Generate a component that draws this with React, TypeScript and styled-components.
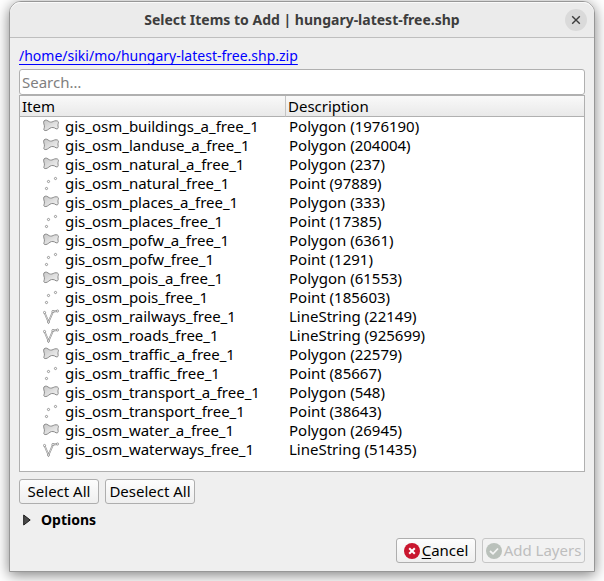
import React, { useState } from 'react';
import styled, { createGlobalStyle } from 'styled-components';

const GlobalStyle = createGlobalStyle`
  *, *::before, *::after { box-sizing: border-box; }
  body {
    margin: 0;
    background: #ffffff;
    color: #000000;
    font-family: "Noto Sans", "Open Sans", sans-serif;
    font-size: 15px;
    line-height: 19px;
  }
  button, input { font: inherit; color: inherit; }
`;

const Desktop = styled.div`
  display: flex;
  min-height: 100vh;
  padding: 1px 9px 9px;
  overflow: hidden;
`;

const Dialog = styled.main`
  flex: 1;
  min-width: 0;
  display: flex;
  flex-direction: column;
  background: #efefef;
  border: 1px solid #979797;
  border-radius: 12px 12px 0 0;
  box-shadow: 0 3px 14px rgba(0, 0, 0, 0.5);
`;

const TitleBar = styled.header`
  display: grid;
  grid-template-columns: 22px 1fr 22px;
  align-items: center;
  height: 36px;
  padding: 0 7px;
  background: #ebebeb;
  border-bottom: 1px solid #bebebe;
  border-radius: 11px 11px 0 0;
  box-shadow: inset 0 1px #fafafa;
`;

const Title = styled.h1`
  grid-column: 2;
  margin: 0;
  color: #3d3d3d;
  font-size: 14px;
  font-weight: 700;
  text-align: center;
  white-space: nowrap;
`;

const CloseButton = styled.button`
  display: grid;
  place-items: center;
  width: 22px;
  height: 22px;
  padding: 0;
  border: 0;
  border-radius: 50%;
  background: #dadada;
  color: #3d3d3d;
`;

const Body = styled.div`
  flex: 1;
  display: flex;
  flex-direction: column;
  padding: 8px 9px;
`;

const PathLink = styled.a`
  align-self: flex-start;
  color: #0000ff;
  font-size: 14px;
  text-underline-offset: 3px;
`;

const Search = styled.input`
  width: 100%;
  height: 26px;
  margin-top: 4px;
  padding: 0 2px;
  background: #ffffff;
  border: 1px solid #b0b0b0;
  border-radius: 3px;
  outline: none;
  &::placeholder { color: #808080; opacity: 1; }
`;

const ListFrame = styled.div`
  flex: 1;
  background: #ffffff;
  border: 1px solid #b0b0b0;
`;

const Table = styled.table`
  width: 100%;
  border-collapse: separate;
  border-spacing: 0;
  table-layout: fixed;
`;

const HeadCell = styled.th<{ $width?: number }>`
  width: ${(p) => (p.$width ? `${p.$width}px` : 'auto')};
  height: 21px;
  padding: 0 2px;
  background: linear-gradient(#f9f9f9, #e9e9e9);
  border-bottom: 1px solid #b0b0b0;
  border-right: ${(p) => (p.$width ? '1px solid #c4c4c4' : '0')};
  font-weight: 400;
  text-align: left;
`;

const Cell = styled.td`
  height: 19px;
  padding: 0 3px;
  white-space: nowrap;
`;

const ItemLabel = styled.span`
  display: flex;
  align-items: center;
  gap: 6px;
  padding-left: 20px;
`;

const LayerIcon = styled.svg`
  flex: none;
  width: 16px;
  height: 16px;
`;

const ButtonRow = styled.div<{ $end?: boolean }>`
  display: flex;
  gap: 6px;
  justify-content: ${(p) => (p.$end ? 'flex-end' : 'flex-start')};
  margin-top: ${(p) => (p.$end ? '9px' : '7px')};
`;

const PushButton = styled.button<{ $width: number }>`
  display: flex;
  align-items: center;
  justify-content: center;
  gap: 2px;
  min-width: ${(p) => p.$width}px;
  height: 25px;
  padding: 0 2px;
  background: linear-gradient(#fdfdfd, #efefef);
  border: 1px solid #aeaeae;
  border-radius: 3px;
  white-space: nowrap;
  &:disabled { color: #bebebe; border-color: #c6c6c6; background: #f2f2f2; }
`;

const Mnemonic = styled.span`
  text-decoration: underline;
  text-underline-offset: 2px;
`;

const ActionIcon = styled.svg`
  flex: none;
  width: 16px;
  height: 16px;
`;

const OptionsToggle = styled.button`
  align-self: flex-start;
  display: flex;
  align-items: center;
  gap: 10px;
  margin-top: 6px;
  padding: 0 4px;
  border: 0;
  background: none;
  font-size: 14px;
  font-weight: 700;
`;

type Kind = 'Polygon' | 'Point' | 'LineString';

const layers: [string, Kind, number][] = [
  ['gis_osm_buildings_a_free_1', 'Polygon', 1976190],
  ['gis_osm_landuse_a_free_1', 'Polygon', 204004],
  ['gis_osm_natural_a_free_1', 'Polygon', 237],
  ['gis_osm_natural_free_1', 'Point', 97889],
  ['gis_osm_places_a_free_1', 'Polygon', 333],
  ['gis_osm_places_free_1', 'Point', 17385],
  ['gis_osm_pofw_a_free_1', 'Polygon', 6361],
  ['gis_osm_pofw_free_1', 'Point', 1291],
  ['gis_osm_pois_a_free_1', 'Polygon', 61553],
  ['gis_osm_pois_free_1', 'Point', 185603],
  ['gis_osm_railways_free_1', 'LineString', 22149],
  ['gis_osm_roads_free_1', 'LineString', 925699],
  ['gis_osm_traffic_a_free_1', 'Polygon', 22579],
  ['gis_osm_traffic_free_1', 'Point', 85667],
  ['gis_osm_transport_a_free_1', 'Polygon', 548],
  ['gis_osm_transport_free_1', 'Point', 38643],
  ['gis_osm_water_a_free_1', 'Polygon', 26945],
  ['gis_osm_waterways_free_1', 'LineString', 51435],
];

function GeometryIcon({ kind }: { kind: Kind }) {
  return (
    <LayerIcon viewBox="0 0 16 16" aria-hidden="true" fill="none" stroke="#8a8a8a">
      {kind === 'Polygon' && (
        <>
          <defs>
            <linearGradient id="land" x1="0" y1="0" x2="1" y2="1">
              <stop offset="0" stopColor="#c8c8c8" />
              <stop offset="1" stopColor="#f4f4f4" />
            </linearGradient>
          </defs>
          <path
            d="M.6 3.2C.6 1 3.4 .5 5 1.9C6.4 3.3 8.6 3.5 10.2 2.5C11.8 1.5 14.6 1.4 15.3 2.8C15.8 4.2 14.6 5.2 15 7C15.6 9.2 14.8 10.3 13 9.8C11.4 8.4 8.6 8 7 9.2C5.4 10.4 3.4 12.2 1.4 11.4C0 10.6 1.8 8.8 1.4 6.8C1.1 5.4 .6 4.4 .6 3.2Z"
            fill="url(#land)"
          />
        </>
      )}
      {kind === 'Point' && (
        <g fill="#ffffff" strokeWidth=".9">
          <circle cx="12.5" cy="2.5" r="1.1" />
          <circle cx="5.5" cy="5.5" r="1.1" />
          <circle cx="3.5" cy="12.5" r="1.1" />
        </g>
      )}
      {kind === 'LineString' && (
        <>
          <path d="M1.5 3.5L5.5 13L10 2.6L14.5 2" strokeWidth="1.8" />
          <path d="M1.5 3.5L5.5 13L10 2.6L14.5 2" stroke="#ffffff" strokeWidth=".6" />
          <g fill="#ffffff" strokeWidth=".8">
            <circle cx="1.5" cy="3.5" r="1.1" />
            <circle cx="5.5" cy="13" r="1.1" />
            <circle cx="10" cy="2.5" r="1.1" />
            <circle cx="14.5" cy="2" r="1.1" />
          </g>
        </>
      )}
    </LayerIcon>
  );
}

export default function App() {
  const [query, setQuery] = useState('');
  const [open, setOpen] = useState(false);
  const shown = layers.filter(([name]) => name.includes(query));

  return (
    <>
      <GlobalStyle />
      <Desktop>
        <Dialog>
          <TitleBar>
            <Title>Select Items to Add | hungary-latest-free.shp</Title>
            <CloseButton aria-label="Close">
              <svg width="10" height="10" viewBox="0 0 10 10" aria-hidden="true">
                <path d="M1.2 1.2L8.8 8.8M8.8 1.2L1.2 8.8" stroke="currentColor" strokeWidth="1.4" />
              </svg>
            </CloseButton>
          </TitleBar>
          <Body>
            <PathLink href="#">/home/siki/mo/hungary-latest-free.shp.zip</PathLink>
            <Search
              type="text"
              aria-label="Search"
              placeholder="Search…"
              value={query}
              onChange={(e) => setQuery(e.target.value)}
            />
            <ListFrame>
              <Table>
                <thead>
                  <tr>
                    <HeadCell $width={266}>Item</HeadCell>
                    <HeadCell>Description</HeadCell>
                  </tr>
                </thead>
                <tbody>
                  {shown.map(([name, kind, count]) => (
                    <tr key={name}>
                      <Cell>
                        <ItemLabel>
                          <GeometryIcon kind={kind} />
                          {name}
                        </ItemLabel>
                      </Cell>
                      <Cell>{`${kind} (${count})`}</Cell>
                    </tr>
                  ))}
                </tbody>
              </Table>
            </ListFrame>
            <ButtonRow>
              <PushButton $width={80}>Select All</PushButton>
              <PushButton $width={90}>Deselect All</PushButton>
            </ButtonRow>
            <OptionsToggle aria-expanded={open} onClick={() => setOpen(!open)}>
              <svg width="8" height="12" viewBox="0 0 8 12" aria-hidden="true">
                <path d="M.7 1L7.2 6L.7 11Z" fill="#4a4a4a" stroke="#1c1c1c" />
              </svg>
              Options
            </OptionsToggle>
            <ButtonRow $end>
              <PushButton $width={80}>
                <ActionIcon viewBox="0 0 16 16" aria-hidden="true">
                  <circle cx="8" cy="8" r="8" fill="#c9162e" />
                  <path d="M5.2 5.2L10.8 10.8M10.8 5.2L5.2 10.8" stroke="#ffffff" strokeWidth="2" />
                </ActionIcon>
                <span><Mnemonic>C</Mnemonic>ancel</span>
              </PushButton>
              <PushButton $width={103} disabled>
                <ActionIcon viewBox="0 0 16 16" aria-hidden="true">
                  <circle cx="8" cy="8" r="8" fill="#bac1bb" />
                  <path d="M4 8L7 10.8L12 5.5" fill="none" stroke="#f4f4f4" strokeWidth="1.8" />
                </ActionIcon>
                Add Layers
              </PushButton>
            </ButtonRow>
          </Body>
        </Dialog>
      </Desktop>
    </>
  );
}
